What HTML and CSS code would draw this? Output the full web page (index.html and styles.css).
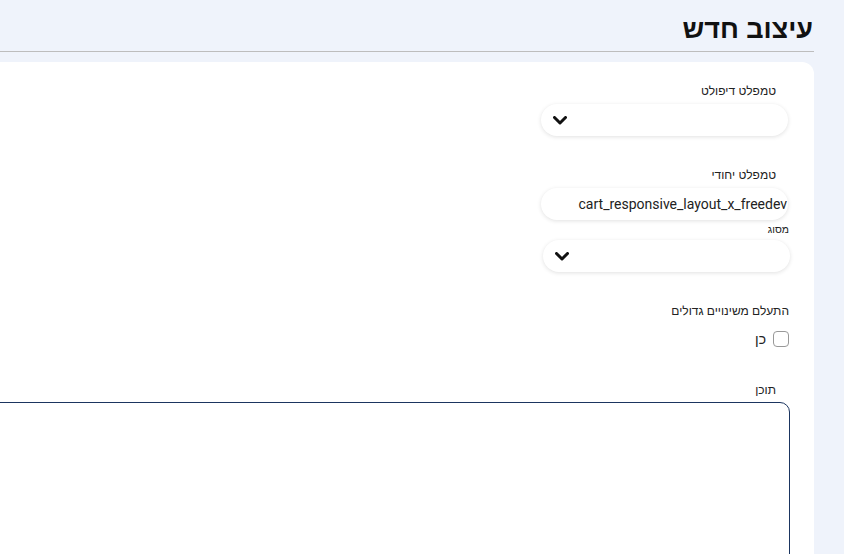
FILE: index.html
```html
<!DOCTYPE html>
<html lang="he" dir="rtl">
<head>
<meta charset="utf-8">
<link rel="stylesheet" href="styles.css">
</head>
<body>
<div class="page">
  <header class="header">
    <h1 class="title">עיצוב חדש</h1>
  </header>
  <main class="card">
    <div class="field f1">
      <label class="label">טמפלט דיפולט</label>
      <div class="select">
        <svg class="chev" width="14" height="9" viewBox="0 0 14 9"><polyline points="1.5,1.5 7,7 12.5,1.5" fill="none" stroke="#111" stroke-width="3" stroke-linecap="round" stroke-linejoin="round"/></svg>
      </div>
    </div>
    <div class="field f2">
      <label class="label">טמפלט יחודי</label>
      <div class="input">cart_responsive_layout_x_freedev</div>
    </div>
    <div class="field f3">
      <label class="label small">מסוג</label>
      <div class="select">
        <svg class="chev" width="14" height="9" viewBox="0 0 14 9"><polyline points="1.5,1.5 7,7 12.5,1.5" fill="none" stroke="#111" stroke-width="3" stroke-linecap="round" stroke-linejoin="round"/></svg>
      </div>
    </div>
    <div class="field f4">
      <label class="label">התעלם משינויים גדולים</label>
      <div class="check-row">
        <span class="checkbox"></span>
        <span class="check-text">כן</span>
      </div>
    </div>
    <div class="field f5">
      <label class="label">תוכן</label>
      <div class="textarea"></div>
    </div>
  </main>
</div>
</body>
</html>
```

FILE: styles.css
```css
html, body {
  margin: 0;
  padding: 0;
  height: 100%;
  overflow: hidden;
}
body {
  background: #eff3fb;
  font-family: Roboto, "Liberation Sans", sans-serif;
  color: #222;
}
.page {
  padding-right: 30px;
  height: 554px;
  display: flex;
  flex-direction: column;
  overflow: hidden;
}
.header {
  flex-shrink: 0;
  height: 51px;
  border-bottom: 1px solid #bdbdbd;
  display: flex;
  align-items: center;
}
.title {
  margin: 0;
  margin-right: 1px;
  margin-top: 6px;
  font-family: "Liberation Sans", sans-serif;
  font-weight: 700;
  font-size: 27px;
  line-height: 32px;
  color: #111;
}
.card {
  flex: 1 0 auto;
  margin-top: 10px;
  background: #fff;
  border-top-right-radius: 12px;
  padding-right: 26px;
  padding-top: 22px;
  overflow: hidden;
}
.field {
  display: flex;
  flex-direction: column;
  align-items: flex-start;
}
.label {
  font-family: "Liberation Sans", sans-serif;
  font-size: 12px;
  line-height: 15px;
  color: #222;
  margin-right: 12px;
}
.label.small {
  font-size: 10.5px;
  line-height: 13px;
  margin-right: -1px;
}
.select, .input {
  box-sizing: border-box;
  width: 247px;
  height: 32px;
  border-radius: 16px;
  background: #fff;
  box-shadow: 0 1px 4px rgba(0, 0, 0, 0.12);
  display: flex;
  align-items: center;
  flex-shrink: 0;
}
.f1 .select { margin-top: 5px; }
.select {
  justify-content: flex-end;
  padding-left: 12px;
}
.chev { display: block; }
.f2 { margin-top: 32px; }
.input {
  margin-top: 5px;
  padding-right: 1px;
  font-size: 14px;
  color: #222;
  white-space: nowrap;
  overflow: hidden;
}
.f3 { margin-top: 3px; }
.f3 .select {
  margin-top: 4px;
  margin-right: -2px;
}
.f4 { margin-top: 32px; }
.f4 .label { margin-right: -1px; }
.check-row {
  margin-top: 12px;
  display: flex;
  align-items: center;
  gap: 7px;
  margin-right: -1px;
}
.checkbox {
  box-sizing: border-box;
  width: 16px;
  height: 16px;
  border: 1px solid #999;
  border-radius: 4px;
  background: #fff;
}
.check-text {
  font-family: "Liberation Sans", sans-serif;
  font-size: 14px;
  line-height: 16px;
  color: #222;
}
.f5 { margin-top: 36px; }
.textarea {
  margin-top: 4px;
  margin-right: -2px;
  box-sizing: border-box;
  width: calc(100% + 40px);
  height: 170px;
  border: 1px solid #1b3560;
  border-top-right-radius: 10px;
  border-top-left-radius: 10px;
  background: #fff;
  flex-shrink: 0;
}
```
